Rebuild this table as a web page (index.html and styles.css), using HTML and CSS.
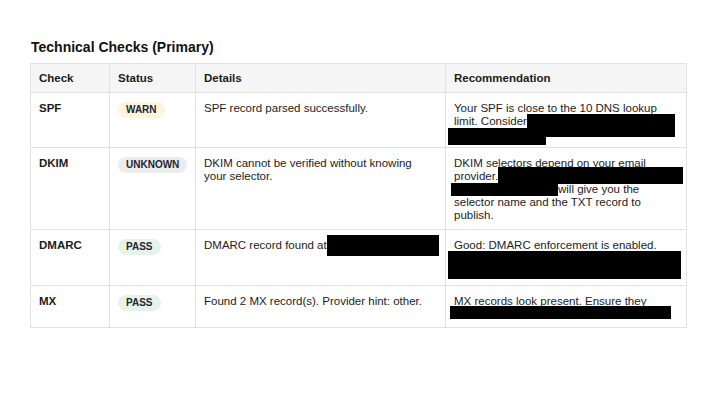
FILE: index.html
```html
<!DOCTYPE html>
<html>
<head>
<meta charset="utf-8">
<link rel="stylesheet" href="styles.css">
</head>
<body>
<section class="panel">
  <h2 class="title">Technical Checks (Primary)</h2>
  <table class="checks">
    <colgroup>
      <col class="c-check"><col class="c-status"><col class="c-details"><col class="c-rec">
    </colgroup>
    <thead>
      <tr><th>Check</th><th>Status</th><th>Details</th><th>Recommendation</th></tr>
    </thead>
    <tbody>
      <tr class="r-spf">
        <td class="name">SPF</td>
        <td><span class="badge warn">WARN</span></td>
        <td>SPF record parsed successfully.</td>
        <td>Your SPF is close to the 10 DNS lookup limit. Consider<span class="redact spf-a"></span><span class="redact line spf-b"></span></td>
      </tr>
      <tr class="r-dkim">
        <td class="name">DKIM</td>
        <td><span class="badge unknown">UNKNOWN</span></td>
        <td>DKIM cannot be verified without knowing your selector.</td>
        <td>DKIM selectors depend on your email provider.<span class="redact dkim-a"></span><br><span class="redact dkim-b"></span>will give you the selector name and the TXT record to publish.</td>
      </tr>
      <tr class="r-dmarc">
        <td class="name">DMARC</td>
        <td><span class="badge pass">PASS</span></td>
        <td>DMARC record found at<span class="redact dmarc-a"></span></td>
        <td>Good: DMARC enforcement is enabled.<span class="redact line dmarc-b"></span></td>
      </tr>
      <tr class="r-mx">
        <td class="name">MX</td>
        <td><span class="badge pass">PASS</span></td>
        <td>Found 2 MX record(s). Provider hint: other.</td>
        <td>MX records look present. Ensure they<span class="redact line mx-a"></span></td>
      </tr>
    </tbody>
  </table>
</section>
</body>
</html>
```

FILE: styles.css
```css
html, body {
  margin: 0;
  padding: 0;
  background: #ffffff;
}
body {
  font-family: "Liberation Sans", Arial, sans-serif;
  color: #1c1c1c;
}
.panel {
  padding: 39px 36px 0 30px;
}
.title {
  margin: 0 0 7px 1px;
  font-size: 14px;
  font-weight: bold;
  color: #111;
  line-height: 17px;
}
.checks {
  width: 656px;
  table-layout: fixed;
  border-collapse: collapse;
  font-size: 11.5px;
  line-height: 13px;
}
.c-check { width: 79px; }
.c-status { width: 86px; }
.c-details { width: 250px; }
.c-rec { width: 241px; }
.checks th, .checks td {
  border: 1px solid #e2e2e2;
  padding: 9px 9px 0 8px;
  text-align: left;
  vertical-align: top;
}
.checks th {
  background: #f5f5f5;
  font-weight: bold;
  padding-top: 8px;
  padding-bottom: 7px;
}
.checks thead tr { height: 29px; }
.checks td.name { font-weight: bold; }
.r-spf { height: 55px; }
.r-dkim { height: 82px; }
.r-dmarc { height: 56px; }
.r-mx { height: 42px; }
.badge {
  display: inline-block;
  vertical-align: top;
  font-size: 10px;
  font-weight: bold;
  line-height: 12px;
  padding: 2px 8px;
  border-radius: 8px;
  margin: 0 0 -3px 0;
  color: #1f2433;
}
.warn { background: #fdf5dc; }
.unknown { background: #ececec; }
.pass { background: #e5f3e8; }
.redact {
  display: inline-block;
  background: #000;
  vertical-align: top;
}
.redact.line {
  display: block;
}
.spf-a { width: 148px; height: 23px; margin: -1px -10px -9px 0; }
.spf-b { width: 98px; height: 17px; margin: 0 0 0 -6px; }
.dkim-a { width: 185px; height: 17px; margin: -3px -12px -1px 0; }
.dkim-b { width: 107px; height: 13px; margin: 0 0 0 -3px; }
.dmarc-a { width: 112px; height: 21px; margin: -4px -10px -4px 0; }
.dmarc-b { width: 233px; height: 28px; margin: -1px 0 0 -6px; }
.mx-a { width: 221px; height: 13px; margin: -2px 0 0 -4px; }
```
